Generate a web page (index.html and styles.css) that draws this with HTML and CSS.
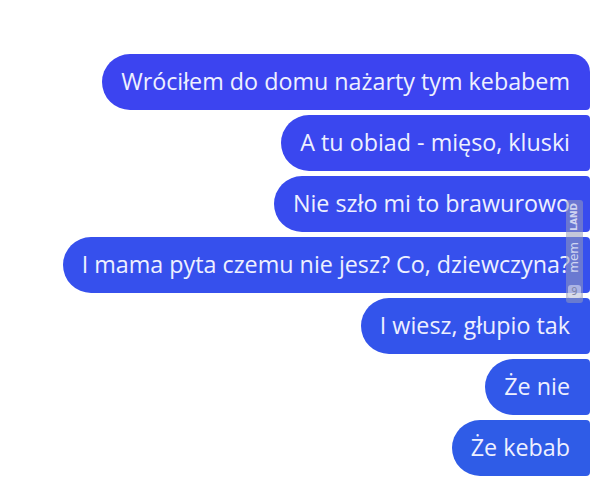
FILE: index.html
```html
<!DOCTYPE html>
<html>
<head>
    <title>Kebab</title>
    <link rel="stylesheet" href="styles.css">
</head>
<body>
    <div class="chat">
        <div class="msg first c1">Wróciłem do domu nażarty tym kebabem</div>
        <div class="msg c2">A tu obiad - mięso, kluski</div>
        <div class="msg c3">Nie szło mi to brawurowo</div>
        <div class="msg c4">I mama pyta czemu nie jesz? Co, dziewczyna?</div>
        <div class="msg c5">I wiesz, głupio tak</div>
        <div class="msg c6">Że nie</div>
        <div class="msg last c7">Że kebab</div>

        <!-- watermark -->
        <div class="mark">
            <span class="mark-ico">9</span>
            <span class="mark-mem">mem</span>
            <span class="mark-land">LAND</span>
        </div>
    </div>
</body>
</html>
```

FILE: styles.css
```css
body {
    margin: 0;
    padding: 0;
    background-color: white;
    font-family: "Open Sans", "Noto Sans", sans-serif;
}
.chat {
    position: relative;
    width: 600px;
    height: 502px;
    box-sizing: border-box;
    padding: 54px 10px 0 0;
    display: flex;
    flex-direction: column;
    align-items: flex-end;
    gap: 5px;
}
.msg {
    height: 56px;
    line-height: 55px;
    padding: 0 20px 0 19px;
    font-size: 23.3px;
    color: #eef0ff;
    border-radius: 28px 4px 4px 28px;
    white-space: nowrap;
}
.msg.first {
    border-top-right-radius: 18px;
}
.c1 { background-color: #3c44f0; }
.c2 { background-color: #3a47ef; }
.c3 { background-color: #384bee; }
.c4 { background-color: #3650ed; }
.c5 { background-color: #3354eb; }
.c6 { background-color: #3158e9; }
.c7 { background-color: #2f5ce7; }

/* watermark */
.mark {
    position: absolute;
    left: 566px;
    top: 200px;
    width: 17px;
    height: 103px;
    border-radius: 3px;
    background-color: rgba(150, 155, 185, 0.55);
    display: flex;
    flex-direction: column-reverse;
    justify-content: space-between;
    align-items: center;
    padding: 3px 0 5px;
    box-sizing: border-box;
    color: rgba(235, 238, 250, 0.8);
    font-family: "DejaVu Sans", sans-serif;
}
.mark-mem, .mark-land {
    writing-mode: vertical-rl;
    transform: rotate(180deg);
    line-height: 15px;
}
.mark-mem {
    font-size: 12px;
}
.mark-land {
    font-size: 9px;
    font-weight: bold;
}
.mark-ico {
    width: 13px;
    height: 13px;
    border-radius: 3px;
    background-color: rgba(235, 238, 250, 0.5);
    font-size: 10px;
    line-height: 13px;
    text-align: center;
    color: rgba(120, 125, 160, 0.9);
}
```
